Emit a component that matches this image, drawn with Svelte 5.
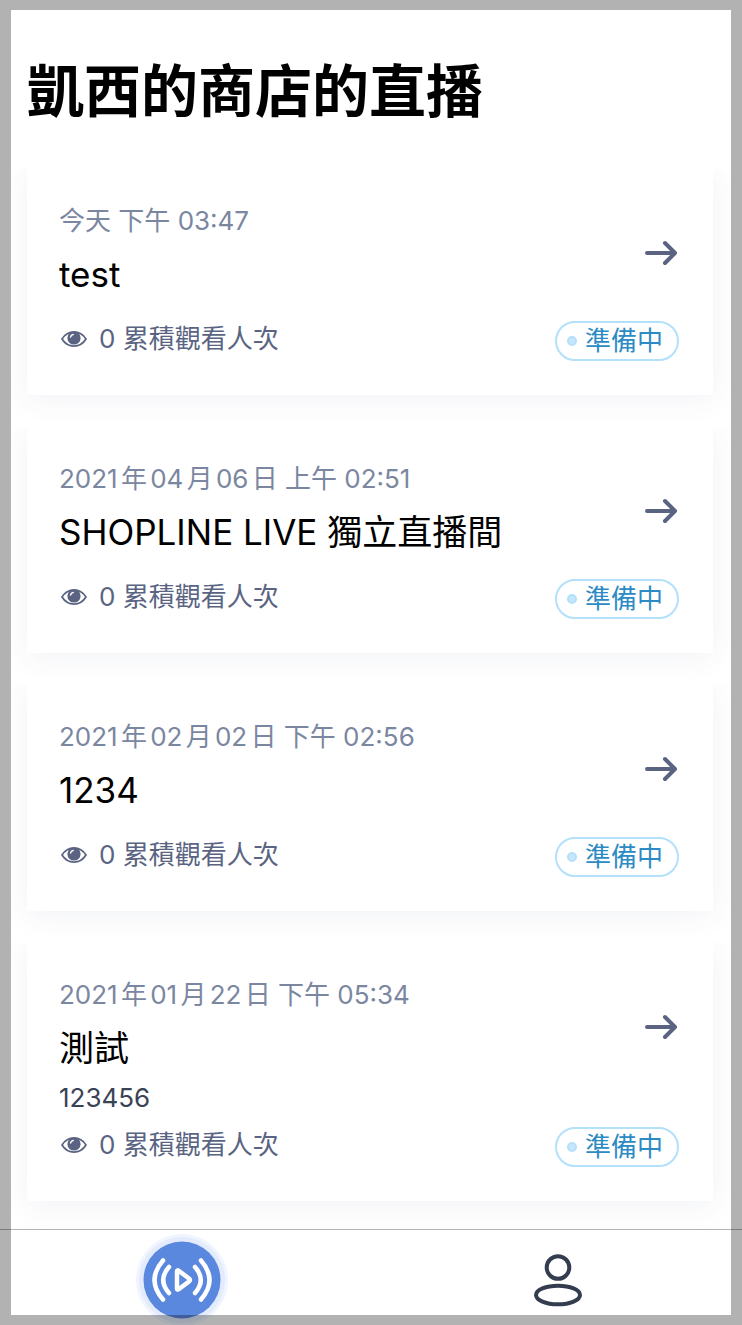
<script lang="ts">
  type Stream = {
    id: number;
    date: string;
    title: string;
    description?: string;
    views: number;
  };

  const shopName = '凱西的商店';

  const streams: Stream[] = [
    { id: 1, date: '今天 下午 03:47', title: 'test', views: 0 },
    { id: 2, date: '2021年04月06日 上午 02:51', title: 'SHOPLINE LIVE 獨立直播間', views: 0 },
    { id: 3, date: '2021年02月02日 下午 02:56', title: '1234', views: 0 },
    { id: 4, date: '2021年01月22日 下午 05:34', title: '測試', description: '123456', views: 0 },
  ];

  let tab = $state('live');
</script>

<div class="screen">
  <main>
    <h1>{shopName}的直播</h1>

    <ul class="list">
      {#each streams as stream (stream.id)}
        <li class="card">
          <div class="head">
            <div class="titles">
              <p class="date">{stream.date}</p>
              <h2>{stream.title}</h2>
            </div>
            <a class="open" href="#stream-{stream.id}" aria-label={stream.title}>
              <svg width="34" height="26" viewBox="0 0 34 26">
                <path d="M2 13H30M20 3L30 13L20 23" />
              </svg>
            </a>
          </div>
          {#if stream.description}
            <p class="description">{stream.description}</p>
          {/if}
          <div class="meta">
            <span class="views">
              <svg width="30" height="20" viewBox="0 0 30 20">
                <path class="lid" d="M3 10C9 0.5 21 0.5 27 10C21 19.500 9 19.500 3 10Z" />
                <circle class="iris" cx="15" cy="9" r="6.6" />
                <path class="glint" d="M11.6 8C11.8 6.6 12.8 5.7 14.2 5.500" />
              </svg>
              {stream.views} 累積觀看人次
            </span>
            <span class="status"><i class="dot"></i>準備中</span>
          </div>
        </li>
      {/each}
    </ul>
  </main>

  <nav class="tabbar">
    <button type="button" aria-label="直播" aria-pressed={tab === 'live'} onclick={() => (tab = 'live')}>
      <svg width="94" height="94" viewBox="0 0 94 94">
        <circle cx="47" cy="47" r="46" fill="#f0f5ff" />
        <circle cx="47" cy="47" r="43" fill="#e3ebfd" />
        <circle cx="47" cy="47" r="38.5" fill="#5988de" />
        <g class="waves">
          <path d="M28 27.5Q11 47 28 66.5" />
          <path d="M34 34Q22.5 47 34 60" />
          <path d="M60 34Q71.5 47 60 60" />
          <path d="M66 27.5Q83 47 66 66.5" />
          <path d="M42 38.5V55.5Q42 57.5 44 56L54 48.5Q56 47 54 45.5L44 38Q42 36.5 42 38.5Z" />
        </g>
      </svg>
    </button>
    <button type="button" aria-label="個人" aria-pressed={tab === 'me'} onclick={() => (tab = 'me')}>
      <svg class="person" width="50" height="54" viewBox="0 0 50 54">
        <circle cx="25" cy="14.5" r="11.3" />
        <ellipse cx="25" cy="42" rx="22" ry="9.3" />
      </svg>
    </button>
  </nav>

  <div class="frame"></div>
</div>

<style>
  :global(body) {
    background: #fff;
  }

  .screen {
    position: relative;
    display: flex;
    flex-direction: column;
    min-height: 100vh;
    overflow: hidden;
    color: #000;
    font-family: Inter, 'Noto Sans CJK TC', sans-serif;
    font-size: 26px;
    line-height: 32px;
  }

  main {
    flex: 1;
    padding: 56px 29px 28px 27px;
  }

  h1,
  h2,
  p,
  ul {
    margin: 0;
    padding: 0;
  }

  h1 {
    font-size: 57px;
    font-weight: 600;
    line-height: 72px;
    margin-bottom: 41px;
  }

  .list {
    display: flex;
    flex-direction: column;
    gap: 32px;
    list-style: none;
  }

  .card {
    padding: 36px 34px 34px 32px;
    background: #fff;
    box-shadow: 0 4px 28px rgba(50, 70, 110, 0.07);
    /* keep the shadow off the card above and the page edge */
    clip-path: inset(0 -18px -32px -16px);
  }

  .head {
    display: flex;
    align-items: center;
    justify-content: space-between;
    padding-bottom: 8px;
  }

  .date {
    margin-bottom: 11px;
    color: #7b87a0;
    text-autospace: normal;
  }

  h2 {
    font-size: 35px;
    font-weight: 400;
    line-height: 52px;
  }

  .open {
    display: flex;
  }

  .open path {
    fill: none;
    stroke: #5a6482;
    stroke-width: 4;
    stroke-linecap: round;
    stroke-linejoin: round;
  }

  .description {
    color: #3a4256;
  }

  .meta {
    display: flex;
    align-items: flex-start;
    justify-content: space-between;
    padding-top: 13px;
  }

  .views {
    display: flex;
    align-items: center;
    gap: 10px;
    color: #5a6482;
    line-height: 36px;
  }

  .lid {
    fill: none;
    stroke: #5a6482;
    stroke-width: 1.8;
    stroke-linejoin: round;
  }

  .iris {
    fill: #5a6482;
  }

  .glint {
    fill: none;
    stroke: #fff;
    stroke-width: 1.5;
    stroke-linecap: round;
  }

  .status {
    display: flex;
    align-items: center;
    gap: 8px;
    box-sizing: border-box;
    height: 40px;
    padding: 0 14px 0 10px;
    border: 2px solid #b3e0fb;
    border-radius: 20px;
    color: #2c8bc4;
  }

  .dot {
    box-sizing: border-box;
    width: 10px;
    height: 10px;
    border: 2px solid #b3e0fb;
    border-radius: 50%;
    background: #c8e6fa;
  }

  .tabbar {
    display: grid;
    grid-template-columns: 1fr 1fr;
    gap: 12px;
    height: 95px;
    padding-right: 2px;
    border-top: 1px solid #b3b3b3;
    background: #fff;
  }

  .tabbar button {
    display: flex;
    align-items: center;
    justify-content: center;
    height: 100px;
    padding: 0;
    border: 0;
    background: none;
    cursor: pointer;
  }

  .waves {
    fill: none;
    stroke: #fff;
    stroke-width: 4.5;
    stroke-linecap: round;
    stroke-linejoin: round;
  }

  .person {
    fill: none;
    stroke: #343d50;
    stroke-width: 4;
  }

  /* dimmed edge drawn over everything, tab bar included */
  .frame {
    position: absolute;
    inset: 0;
    border: solid rgba(0, 0, 0, 0.3);
    border-width: 10px 11px;
    pointer-events: none;
  }
</style>
